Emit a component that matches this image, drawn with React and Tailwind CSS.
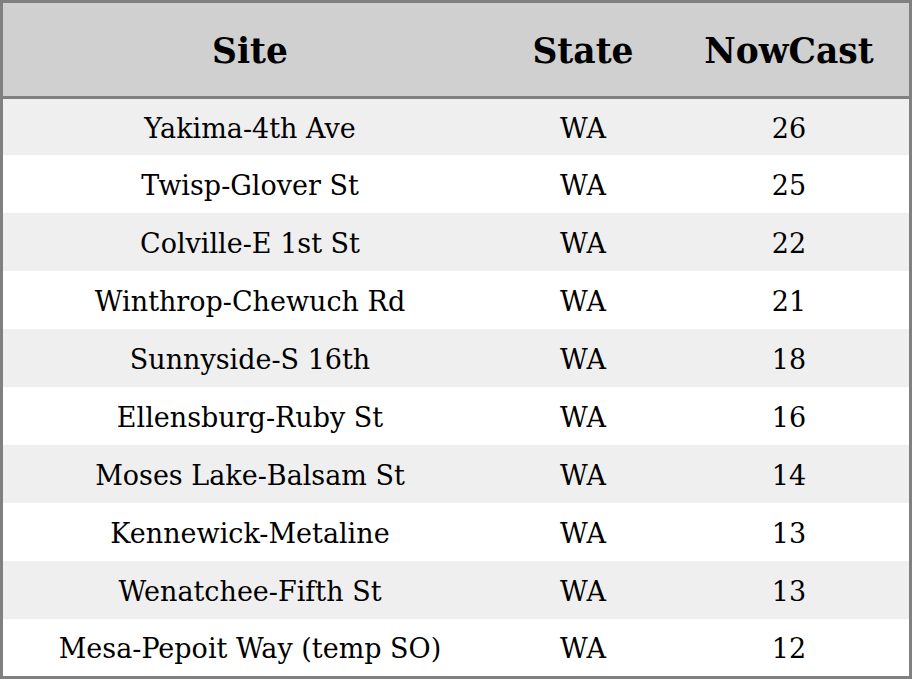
// NowCast site table
const rows = [
  ['Yakima-4th Ave', 'WA', 26],
  ['Twisp-Glover St', 'WA', 25],
  ['Colville-E 1st St', 'WA', 22],
  ['Winthrop-Chewuch Rd', 'WA', 21],
  ['Sunnyside-S 16th', 'WA', 18],
  ['Ellensburg-Ruby St', 'WA', 16],
  ['Moses Lake-Balsam St', 'WA', 14],
  ['Kennewick-Metaline', 'WA', 13],
  ['Wenatchee-Fifth St', 'WA', 13],
  ['Mesa-Pepoit Way (temp SO)', 'WA', 12],
];

export default function App() {
  return (
    <div className="w-[912px] h-[679px] overflow-hidden bg-white font-['DejaVu_Serif',serif] text-black">
      <div className="border-[3px] border-[#808080]">
        <div className="grid grid-cols-[494px_172px_1fr] h-[96px] pt-[4px] items-center bg-[#d0d0d0] border-b-[3px] border-[#808080] text-[34.5px] font-bold">
          <div className="text-center">Site</div>
          <div className="text-center">State</div>
          <div className="text-center">NowCast</div>
        </div>
        {rows.map(([site, st, v], i) => (
          <div
            key={i}
            className={`grid grid-cols-[494px_172px_1fr] items-center pt-[4px] text-[27px] ${
              i === 0 ? 'h-[56px]' : i === rows.length - 1 ? 'h-[57px]' : 'h-[58px]'
            } ${i % 2 === 0 ? 'bg-[#efefef]' : 'bg-white'}`}
          >
            <div className="text-center">{site}</div>
            <div className="text-center">{st}</div>
            <div className="text-center">{v}</div>
          </div>
        ))}
      </div>
    </div>
  );
}
